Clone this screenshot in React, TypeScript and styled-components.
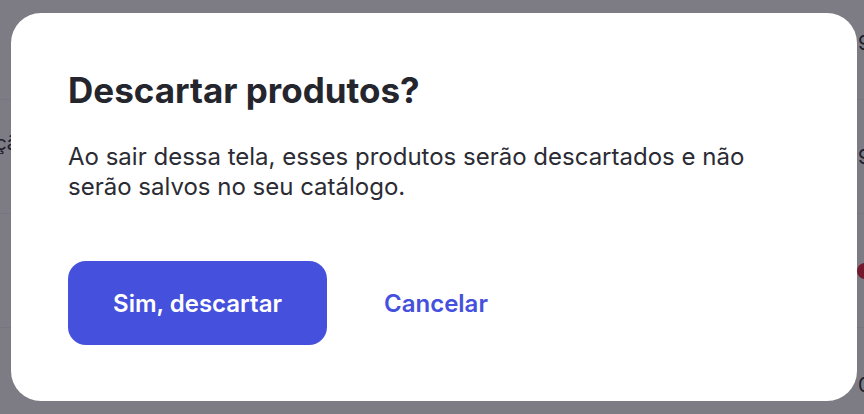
import React from "react";
import styled, { createGlobalStyle } from "styled-components";

const GlobalStyle = createGlobalStyle`
  html, body {
    margin: 0;
    padding: 0;
    width: 100%;
    height: 100%;
    overflow: hidden;
    font-family: Inter, "Noto Sans", sans-serif;
  }
  #root {
    height: 100%;
  }
`;

const rows = [
  { left: "", right: "9", dot: false },
  { left: "Produto sem descrição", right: "9", dot: false },
  { left: "", right: "", dot: true },
  { left: "", right: "0", dot: false },
];

const App = () => {
  return (
    <>
      <GlobalStyle />
      <Page>
        <List>
          {rows.map((r, i) => (
            <Row key={i}>
              <LeftCell>{r.left}</LeftCell>
              <Middle />
              <RightCell>{r.dot ? <Dot /> : r.right}</RightCell>
            </Row>
          ))}
        </List>
      </Page>

      <Overlay>
        <Modal role="dialog" aria-modal="true">
          <Title>Descartar produtos?</Title>
          <Text>
            Ao sair dessa tela, esses produtos serão descartados e não
            <br />
            serão salvos no seu catálogo.
          </Text>
          <Actions>
            <PrimaryButton>Sim, descartar</PrimaryButton>
            <LinkButton>Cancelar</LinkButton>
          </Actions>
        </Modal>
      </Overlay>
    </>
  );
};

export default App;

const Page = styled.div`
  height: 100%;
  background-color: #f7f7fa;
  overflow: hidden;
`;

const List = styled.div`
  display: flex;
  flex-direction: column;
  margin-top: -14px;
`;

const Row = styled.div`
  display: grid;
  grid-template-columns: 30px 1fr 6px;
  height: 113px;
  border-bottom: 1px solid #e9e9f0;
  align-items: center;
  color: #3a3a44;
  font-size: 20px;
  line-height: 24px;
`;

const LeftCell = styled.div`
  display: flex;
  justify-content: flex-end;
  align-self: start;
  padding-top: 31px;
  white-space: nowrap;
  min-width: 0;
`;

const Middle = styled.div``;

const RightCell = styled.div`
  display: flex;
  align-items: center;
  white-space: nowrap;
  overflow: visible;
`;

const Dot = styled.div`
  flex-shrink: 0;
  width: 16px;
  height: 16px;
  margin-left: -1px;
  border-radius: 50%;
  background-color: #e0304a;
`;

const Overlay = styled.div`
  position: fixed;
  inset: 0;
  background-color: rgba(4, 2, 16, 0.5);
  display: flex;
  align-items: center;
  justify-content: center;
`;

const Modal = styled.div`
  width: 846px;
  box-sizing: border-box;
  margin-left: 4px;
  background-color: #fff;
  border-radius: 30px;
  padding: 56px 56px 56px 57px;
  display: flex;
  flex-direction: column;
`;

const Title = styled.h2`
  margin: 0;
  font-size: 35px;
  line-height: 42px;
  font-weight: 700;
  color: #25252e;
`;

const Text = styled.p`
  margin: 31px 0 0;
  font-size: 24px;
  line-height: 30px;
  color: #2b2b34;
`;

const Actions = styled.div`
  display: flex;
  align-items: center;
  gap: 33px;
  margin-top: 59px;
`;

const PrimaryButton = styled.button`
  width: 259px;
  height: 84px;
  border: none;
  border-radius: 18px;
  background-color: #4550dd;
  color: #fff;
  font-family: Inter, "Noto Sans", sans-serif;
  font-size: 24px;
  font-weight: 600;
  cursor: pointer;
`;

const LinkButton = styled.button`
  border: none;
  background: none;
  padding: 12px 24px;
  color: #4550dd;
  font-family: Inter, "Noto Sans", sans-serif;
  font-size: 24px;
  font-weight: 600;
  cursor: pointer;
`;
